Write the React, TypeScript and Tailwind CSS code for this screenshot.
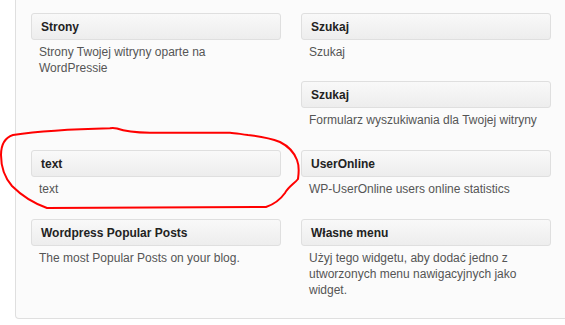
type Widget = { title: string; desc: string };

function WidgetItem({ w, className = "" }: { w: Widget; className?: string }) {
  return (
    <div className={className}>
      <div className="h-[27px] rounded-[3px] border border-[#dfdfdf] bg-gradient-to-b from-[#f9f9f9] to-[#ededed] pl-[9px] flex items-center">
        <h4 className="text-[12px] leading-[16px] font-bold text-[#222]">{w.title}</h4>
      </div>
      <p className="pl-[8px] pr-[6px] pt-[4px] text-[12px] leading-[16px] text-[#555]">{w.desc}</p>
    </div>
  );
}

export default function App() {
  return (
    <div
      className="relative w-[565px] h-[325px] bg-white overflow-hidden"
      style={{ fontFamily: '"Liberation Sans", Arial, sans-serif' }}
    >
      <div className="ml-[15px] h-[319px] border-l border-b border-[#dfdfdf] rounded-bl-[4px] bg-[#fbfbfb] pl-[15px] pt-[13px]">
        <div className="grid grid-cols-[250px_250px] grid-rows-[68px_69px_69px_auto] gap-x-[20px]">
          <WidgetItem
            className="row-span-2"
            w={{ title: "Strony", desc: "Strony Twojej witryny oparte na WordPressie" }}
          />
          <WidgetItem w={{ title: "Szukaj", desc: "Szukaj" }} />
          <WidgetItem w={{ title: "Szukaj", desc: "Formularz wyszukiwania dla Twojej witryny" }} />
          <WidgetItem w={{ title: "text", desc: "text" }} />
          <WidgetItem w={{ title: "UserOnline", desc: "WP-UserOnline users online statistics" }} />
          <WidgetItem w={{ title: "Wordpress Popular Posts", desc: "The most Popular Posts on your blog." }} />
          <WidgetItem
            w={{
              title: "Własne menu",
              desc: "Użyj tego widgetu, aby dodać jedno z utworzonych menu nawigacyjnych jako widget.",
            }}
          />
        </div>
      </div>

      {/* red hand-drawn circle around the "text" widget */}
      <svg className="absolute left-0 top-0 pointer-events-none" width="565" height="325" viewBox="0 0 565 325">
        <path
          d="M110,128.3 C80,129 40,131 13,135 C4,138 1,145 1,155 C1,168 5,178 12,186 C20,194 30,202 47,208 L150,207.5 L266,207 C272,205 280,200 285,193 C288,187 295,183 298,179 C299,172 299,165 297,160 C294,152 288,146 280,142 C270,138 258,136 248,135 C240,134 235,133 230,132.7 L150,132.7 C135,132.5 124,131 117,128.5 C114,127.8 112,127.8 110,128.3 Z"
          fill="none"
          stroke="#ff0000"
          strokeWidth="2"
          strokeLinejoin="round"
        />
      </svg>
    </div>
  );
}
